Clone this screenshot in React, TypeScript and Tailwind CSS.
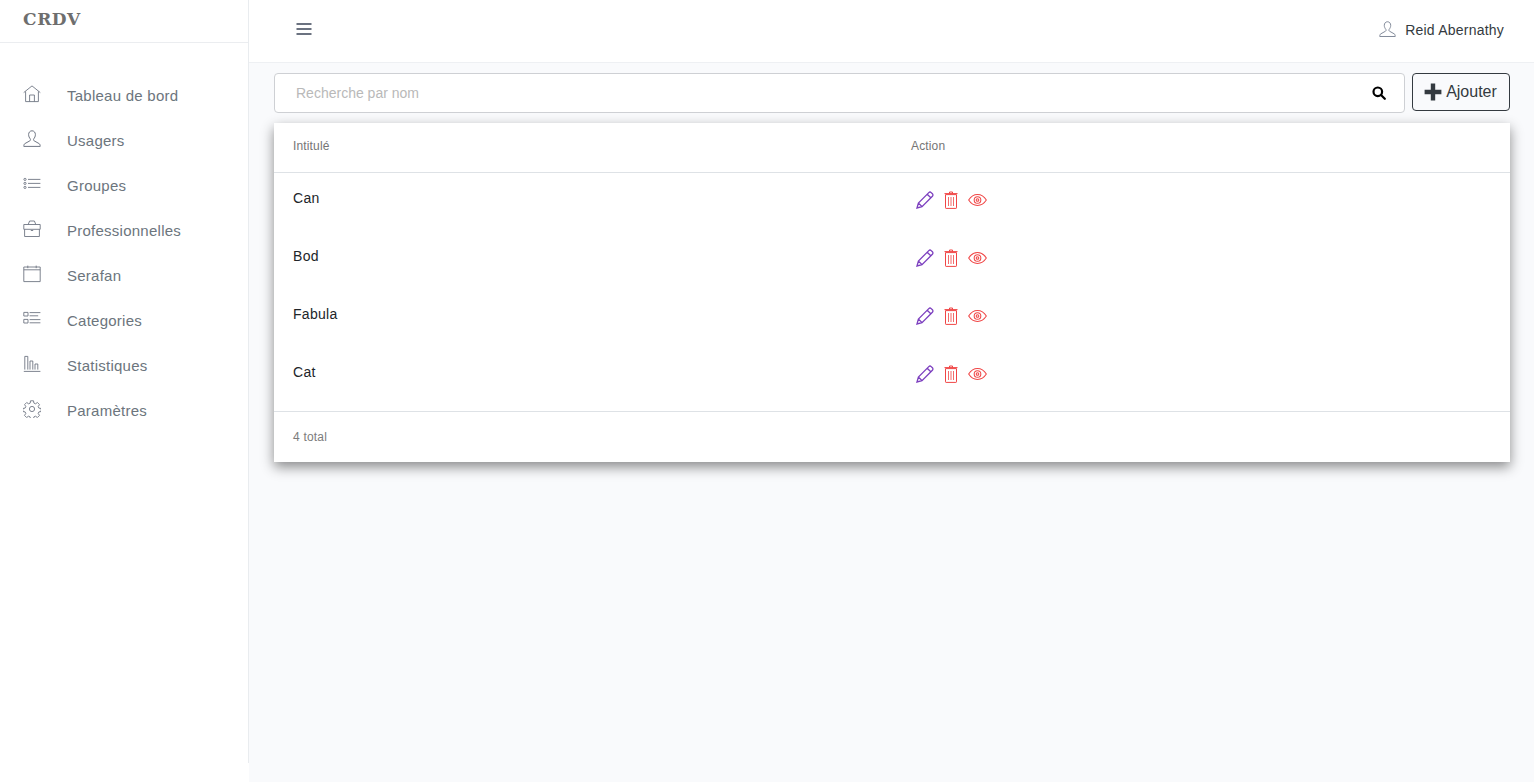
import React from "react";

const HomeIcon = () => (
  <svg width="18" height="18" viewBox="0 0 18 18" fill="none" stroke="currentColor" strokeWidth="0.9">
    <path d="M0.7 7.6 9 0.9l8.3 6.7M2.6 6.4V16.6h12.8V6.4M6.6 16.6V10h4.8v6.6" />
  </svg>
);
const UserIcon = ({ size = 18 }: { size?: number }) => (
  <svg width={size} height={size} viewBox="0 0 18 18" fill="none" stroke="currentColor" strokeWidth="1">
    <path d="M5.6 4.6C5.6 2.4 7 0.8 9 0.8s3.4 1.6 3.4 3.8c0 1.7-.8 3.2-1.6 4.2-.4.6-.4 1.600.3 2l5 2.800c.9.500 1.100 1.600 1.100 2.800H.8c0-1.200.2-2.300 1.100-2.800l5-2.800c.7-.4.7-1.400.3-2-.8-1-1.600-2.500-1.600-4.200Z" />
  </svg>
);
const ListIcon = () => (
  <svg width="18" height="18" viewBox="0 0 18 18" fill="none" stroke="currentColor" strokeWidth="0.9">
    <path d="M5 4.4h12.4M5 8.4h12.4M5 12.4h12.4" />
    <circle cx="2" cy="4.4" r="1.1" />
    <circle cx="2" cy="8.4" r="1.1" />
    <circle cx="2" cy="12.4" r="1.1" />
  </svg>
);
const BriefcaseIcon = () => (
  <svg width="18" height="18" viewBox="0 0 18 18" fill="none" stroke="currentColor" strokeWidth="0.9">
    <path d="M0.8 4.5h16.4v4.800H0.8ZM1.600 9.300v7.200h14.800V9.300M5.200 4.500 6.600 1h4.800l1.400 3.500M7.800 10.500h2.400" />
  </svg>
);
const CalendarIcon = () => (
  <svg width="18" height="18" viewBox="0 0 18 18" fill="none" stroke="currentColor" strokeWidth="0.9">
    <path d="M0.8 2h16.400v14.600H0.8ZM0.800 4.800h16.400M4.800 0.600v2.600M13.200 0.600v2.600" />
  </svg>
);
const CategoryIcon = () => (
  <svg width="18" height="18" viewBox="0 0 18 18" fill="none" stroke="currentColor" strokeWidth="0.9">
    <path d="M0.800 2.400h4.200v3.600H0.800ZM0.800 9.400h4.200v3.600H0.800ZM6.600 2.600h10.800M6.600 5.800h8.600M6.600 9.600h10.800M6.600 12.800h10.800" />
  </svg>
);
const ChartIcon = () => (
  <svg width="18" height="18" viewBox="0 0 18 18" fill="none" stroke="currentColor" strokeWidth="0.9">
    <path d="M0.800 16.400h16.600M1.800 14.600V1.400h3v13.200M7 14.600V6h2.800v8.600M12 14.600V9h2.800v5.600" />
  </svg>
);
const GearIcon = () => (
  <svg width="18" height="18" viewBox="0 0 18 18" fill="none" stroke="currentColor" strokeWidth="0.9">
    <circle cx="9" cy="9" r="2.600" />
    <path d="M7.500 0.800h3l.4 2.300 1.600.7 1.900-1.300 2.100 2.100-1.300 1.900.7 1.600 2.300.4v3l-2.300.4-.7 1.600 1.300 1.900-2.100 2.100-1.900-1.300-1.600.7-.4 2.300h-3l-.4-2.300-1.600-.7-1.900 1.300-2.100-2.100 1.300-1.900-.7-1.600-2.300-.4v-3l2.300-.4.7-1.600L1.600 4.600l2.100-2.100 1.900 1.300 1.600-.7Z" />
  </svg>
);
const MenuIcon = () => (
  <svg width="16" height="14" viewBox="0 0 16 14" fill="none" stroke="#6b7280" strokeWidth="2">
    <path d="M0.500 2h15M0.500 7h15M0.500 12h15" />
  </svg>
);
const SearchIcon = () => (
  <svg width="14" height="14" viewBox="0 0 14 14" fill="none" stroke="#000" strokeWidth="2.200">
    <circle cx="5.800" cy="5.800" r="4.300" />
    <path d="M9 9 12.800 12.800" strokeLinecap="round" />
  </svg>
);
const PlusIcon = () => (
  <svg width="18" height="18" viewBox="0 0 18 18" fill="#343a40">
    <path d="M6.800 0.600h4.400v6.200h6.200v4.400h-6.200v6.200H6.800v-6.200H0.600V6.800h6.200Z" />
  </svg>
);
const PencilIcon = () => (
  <svg width="18" height="18" viewBox="0 0 18 18" fill="none" stroke="#7c3fbf" strokeWidth="1.300">
    <path d="M1 17l1.400-5L12.800 1.600c.7-.7 1.700-.7 2.400 0l1.200 1.200c.7.700.7 1.700 0 2.400L6 15.600ZM2.400 12 6 15.600M11.200 3.200l3.600 3.600" />
  </svg>
);
const TrashIcon = () => (
  <svg width="14" height="18" viewBox="0 0 14 18" fill="none" stroke="#f04545" strokeWidth="1">
    <path d="M1.500 3.600h11v13.200a.6.6 0 0 1-.6.6H2.100a.6.6 0 0 1-.6-.6ZM0.500 2.600h13M5.500 2.600V1h3v1.600" />
    <path d="M4.500 6v9M7 6v9M9.500 6v9" strokeWidth="0.8" />
  </svg>
);
const EyeIcon = () => (
  <svg width="19" height="14" viewBox="0 0 20 14" fill="none" stroke="#f04545" strokeWidth="1.100">
    <path d="M0.700 7C3 3.400 6.200 1.300 10 1.300S17 3.400 19.300 7C17 10.600 13.800 12.700 10 12.700S3 10.600 0.700 7Z" />
    <circle cx="10" cy="7" r="3.500" />
    <circle cx="10" cy="7" r="1.400" />
  </svg>
);

const navItems = [
  { label: "Tableau de bord", icon: <HomeIcon /> },
  { label: "Usagers", icon: <UserIcon /> },
  { label: "Groupes", icon: <ListIcon /> },
  { label: "Professionnelles", icon: <BriefcaseIcon /> },
  { label: "Serafan", icon: <CalendarIcon /> },
  { label: "Categories", icon: <CategoryIcon /> },
  { label: "Statistiques", icon: <ChartIcon /> },
  { label: "Paramètres", icon: <GearIcon /> },
];

const rows = ["Can", "Bod", "Fabula", "Cat"];

export default function App() {
  return (
    <div className="flex h-[782px] w-[1534px] overflow-hidden bg-white font-['Liberation_Sans',Arial,sans-serif]">
      {/* Sidebar */}
      <aside className="h-[763px] w-[249px] shrink-0 border-r border-[#e9ecef] bg-white">
        <div className="flex h-[43px] items-start border-b border-[#ebedf0] pl-[23px]">
          <span className="font-['DejaVu_Serif',serif] text-[17px] font-bold leading-[39px] tracking-[0.6px] text-[#6e6e6e]">
            CRDV
          </span>
        </div>
        <nav className="flex flex-col pt-[31px]">
          {navItems.map((item) => (
            <div key={item.label} className="flex h-[45px] items-center pl-[23px]">
              <span className="-mt-[5px] w-[44px] text-[#6f7683]">{item.icon}</span>
              <span className="text-[15px] tracking-[0.25px] text-[#6c757d]">{item.label}</span>
            </div>
          ))}
        </nav>
      </aside>

      <div className="flex h-full flex-1 flex-col bg-[#f9fafc]">
        {/* Top bar */}
        <header className="flex h-[63px] shrink-0 items-center justify-between border-b border-[#eef0f3] bg-white pb-[2px] pl-[47px] pr-[30px]">
          <span className="-mt-[2px]">
            <MenuIcon />
          </span>
          <div className="flex items-center gap-[9px]">
            <span className="-mt-[2px] text-[#7b8494]">
              <UserIcon size={17} />
            </span>
            <span className="text-[14px] tracking-[0.22px] text-[#343a40]">Reid Abernathy</span>
          </div>
        </header>

        <main className="pl-[25px] pr-[24px] pt-[10px]">
          {/* Search and add */}
          <div className="flex items-start gap-[7px]">
            <div className="flex h-[40px] flex-1 items-center justify-between rounded-[4px] border border-[#ced0d4] bg-white pl-[21px] pr-[18px]">
              <span className="text-[14px] text-[#b9b9b9]">Recherche par nom</span>
              <SearchIcon />
            </div>
            <button className="flex h-[38px] w-[98px] items-center justify-center gap-[4px] rounded-[4px] border border-[#343a40] pr-[1px] text-[16px] text-[#343a40]">
              <PlusIcon />
              Ajouter
            </button>
          </div>

          {/* Table card */}
          <div className="mt-[10px] bg-white shadow-[0_5px_12px_rgba(0,0,0,0.45)]">
            <div className="flex h-[50px] items-center border-b border-[#dee2e6] pb-[4px] pl-[19px] text-[12px] tracking-[0.15px] text-[#757575]">
              <span className="w-[618px]">Intitulé</span>
              <span>Action</span>
            </div>
            <div className="pb-[6px]">
              {rows.map((row) => (
                <div key={row} className="flex h-[58px] items-start pl-[19px]">
                  <span className="w-[618px] pt-[15px] text-[14px] tracking-[0.3px] text-[#212529]">{row}</span>
                  <div className="flex items-center pl-[5px] pt-[18px]">
                    <PencilIcon />
                    <span className="ml-[10px]">
                      <TrashIcon />
                    </span>
                    <span className="ml-[10px]">
                      <EyeIcon />
                    </span>
                  </div>
                </div>
              ))}
            </div>
            <div className="flex h-[51px] items-center border-t border-[#dee2e6] pl-[19px] text-[12px] tracking-[0.2px] text-[#7c7c7c]">
              4 total
            </div>
          </div>
        </main>
      </div>
    </div>
  );
}
